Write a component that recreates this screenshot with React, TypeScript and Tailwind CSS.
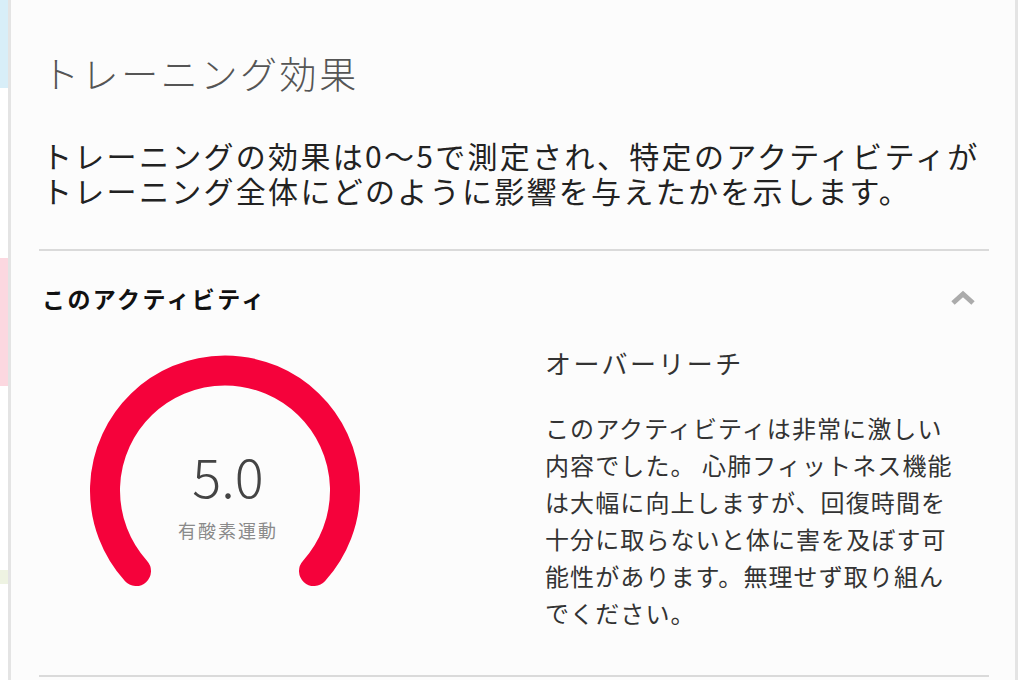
const paragraph = [
  "このアクティビティは非常に激しい",
  "内容でした。 心肺フィットネス機能",
  "は大幅に向上しますが、回復時間を",
  "十分に取らないと体に害を及ぼす可",
  "能性があります。無理せず取り組ん",
  "でください。",
];

function Gauge() {
  return (
    <div className="relative w-[280px] h-[250px]">
      <svg width="280" height="250" viewBox="0 0 280 250" className="absolute left-0 top-0">
        <path
          d="M 51 226 A 120 120 0 1 1 229 226"
          fill="none"
          stroke="#f5023b"
          strokeWidth="30"
          strokeLinecap="round"
        />
      </svg>
      <div className="absolute left-[6px] right-0 top-[100px] flex flex-col items-center">
        <div className="text-[54px] leading-[60px] font-light text-[#444]">5.0</div>
        <div className="mt-[14px] text-[18px] leading-[22px] tracking-[2px] text-[#8a8a8a]">有酸素運動</div>
      </div>
    </div>
  );
}

export default function App() {
  return (
    <div className="flex w-[1024px] h-[680px] overflow-hidden bg-white font-['Noto_Sans_CJK_JP','Noto_Sans',sans-serif]">
      {/* page behind, peeking on the left */}
      <div className="flex flex-col w-[8px] shrink-0">
        <div className="h-[88px] bg-[#d8eef8]" />
        <div className="h-[170px]" />
        <div className="h-[128px] bg-[#fcd8e0]" />
        <div className="h-[184px]" />
        <div className="h-[14px] bg-[#eef3e2]" />
      </div>
      <div className="w-[3px] shrink-0 bg-[#e4e4e4]" />

      <div className="flex-1 bg-[#fcfcfc] pl-[28px] pr-[26px] pt-[50px]">
        <h1 className="pl-[3px] text-[37px] leading-[46px] tracking-[2.6px] font-light text-[#555]">
          トレーニング効果
        </h1>
        <p className="mt-[42px] pl-[3px] text-[30px] leading-[35px] tracking-[2.3px] text-[#222]">
          トレーニングの効果は0～5で測定され、特定のアクティビティが
          <br />
          トレーニング全体にどのように影響を与えたかを示します。
        </p>
        <div className="mt-[41px] h-[2px] bg-[#dadada]" />

        <div className="flex items-center justify-between pt-[32px] pl-[3px]">
          <h2 className="text-[23px] leading-[30px] tracking-[2.4px] font-bold text-[#111]">
            このアクティビティ
          </h2>
          <svg width="26" height="16" viewBox="0 0 26 16" className="mr-[13px]">
            <polyline points="3,13 13,4 23,13" fill="none" stroke="#ababab" strokeWidth="5" strokeLinejoin="miter" />
          </svg>
        </div>

        <div className="flex items-start mt-[32px]">
          <div className="w-[506px] shrink-0 pl-[46px]">
            <Gauge />
          </div>
          <div className="text-[#333]">
            <div className="text-[26px] leading-[36px] tracking-[2.4px]">オーバーリーチ</div>
            <div className="mt-[28px] text-[24px] leading-[37px] tracking-[1.1px]">
              {paragraph.map((line) => (
                <div key={line}>{line}</div>
              ))}
            </div>
          </div>
        </div>

        <div className="mt-[44px] h-[2px] bg-[#dadada]" />
      </div>

      <div className="w-[3px] shrink-0 bg-[#e4e4e4]" />
      <div className="w-[6px] shrink-0 bg-white" />
    </div>
  );
}
